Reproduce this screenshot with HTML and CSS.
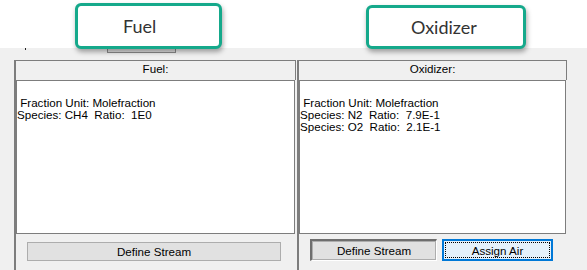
FILE: index.html
```html
<!DOCTYPE html>
<html lang="en">
<head>
  <meta charset="UTF-8" />
  <title>Stream Definition</title>
  <link rel="stylesheet" href="styles.css">
</head>
<body>
  <div class="page">
    <div class="top-band"></div>

    <div class="app">
      <div class="tool-row">
        <span class="tick"></span>
        <span class="hidden-btn"></span>
      </div>

      <div class="panels">
        <div class="panel fuel">
          <div class="panel-head">Fuel:</div>
          <div class="panel-box">
            <div>&nbsp;Fraction Unit: Molefraction</div>
            <div>Species: CH4&nbsp; Ratio:&nbsp; 1E0</div>
          </div>
          <div class="panel-foot">
            <button class="win-btn wide">Define Stream</button>
          </div>
        </div>

        <div class="panel oxid">
          <div class="panel-head">Oxidizer:</div>
          <div class="panel-box">
            <div>&nbsp;Fraction Unit: Molefraction</div>
            <div>Species: N2&nbsp; Ratio:&nbsp; 7.9E-1</div>
            <div>Species: O2&nbsp; Ratio:&nbsp; 2.1E-1</div>
          </div>
          <div class="panel-foot">
            <span class="sunken"><button class="win-btn define">Define Stream</button></span>
            <button class="win-btn focused">Assign Air</button>
          </div>
        </div>
      </div>
    </div>

    <!-- callouts over the screenshot -->
    <div class="callout callout-fuel">Fuel</div>
    <div class="callout callout-oxid">Oxidizer</div>
  </div>
</body>
</html>
```

FILE: styles.css
```css
body {
  margin: 0;
  background: #fff;
  font-family: "Liberation Sans", Arial, sans-serif;
}
.page {
  position: relative;
  width: 587px;
  height: 270px;
  overflow: hidden;
}
.top-band {
  height: 48px;
  background: #fff;
}
.app {
  height: 222px;
  background: #f0f0f0;
  color: #000;
  font-size: 11.6px;
}
.tool-row {
  height: 12px;
  position: relative;
  display: flex;
  align-items: flex-start;
}
.tick {
  width: 1px;
  height: 2px;
  margin-left: 25px;
  background: #222;
}
.hidden-btn {
  width: 67px;
  height: 4px;
  margin-left: 81px;
  border: 1px solid #8c8c8c;
  border-top: none;
  background: #e1e1e1;
}
.panels {
  display: flex;
  padding-left: 14px;
  height: 210px;
}
.panel {
  display: flex;
  flex-direction: column;
  border-left: 2px solid #7d7d7d;
}
.panel.fuel {
  width: 280px;
  margin-right: 1px;
}
.panel.oxid {
  width: 268px;
}
.panel-head {
  height: 19px;
  line-height: 16px;
  border-top: 1px solid #7d7d7d;
  border-right: 1px solid #7d7d7d;
  text-align: center;
}
.panel-box {
  margin-right: 1px;
  padding: 16px 0 0 0;
  box-sizing: border-box;
  height: 154px;
  background: #fff;
  border: 1px solid #7d7d7d;
  line-height: 12px;
}
.panel-foot {
  display: flex;
  align-items: flex-start;
}
.fuel .panel-foot {
  padding: 8px 0 0 11px;
}
.oxid .panel-foot {
  padding: 5px 0 0 11px;
  gap: 5px;
}
.win-btn {
  font-family: "Liberation Sans", Arial, sans-serif;
  font-size: 11.6px;
  color: #000;
  background: #e1e1e1;
  border: 1px solid #adadad;
  padding: 0;
  margin: 0;
}
.win-btn.wide {
  width: 254px;
  height: 19px;
}
.sunken {
  display: block;
  border-top: 2px solid #6e6e6e;
  border-left: 2px solid #6e6e6e;
  border-right: 1px solid #fff;
  border-bottom: 1px solid #fff;
}
.win-btn.define {
  display: block;
  width: 124px;
  height: 19px;
}
.win-btn.focused {
  width: 111px;
  height: 22px;
  background: #e5f1fb;
  border: 2px solid #0078d7;
  outline: 1px dotted #000;
  outline-offset: -4px;
}
.callout {
  position: absolute;
  box-sizing: border-box;
  background: #fff;
  border: 3px solid #15a98b;
  border-radius: 6px;
  box-shadow: 1px 3px 5px rgba(0, 0, 0, 0.35);
  font-family: Lato, "Open Sans", sans-serif;
  font-size: 18px;
  color: #333;
  line-height: 40px;
}
.callout-fuel {
  left: 75px;
  top: 3px;
  width: 147px;
  height: 46px;
  padding-left: 45px;
}
.callout-oxid {
  left: 366px;
  top: 5px;
  width: 160px;
  height: 44px;
  padding-left: 42px;
  line-height: 38px;
}
```
